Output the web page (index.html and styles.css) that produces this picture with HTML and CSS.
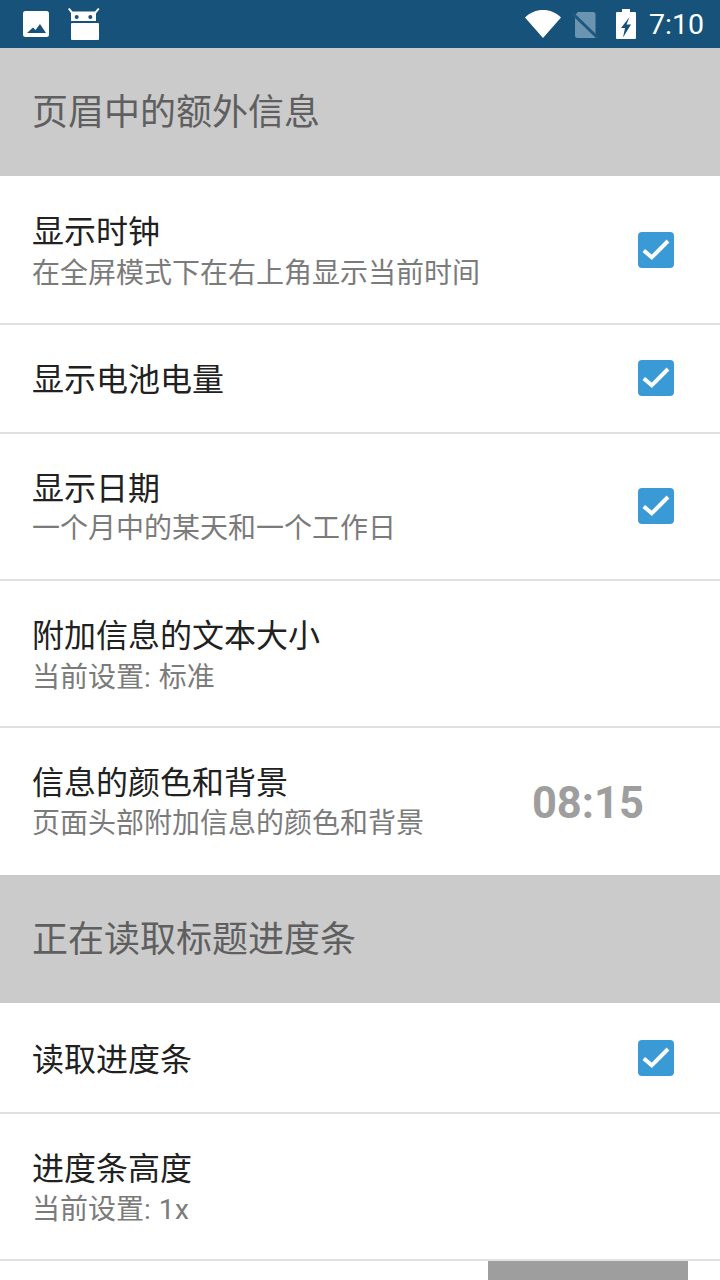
FILE: index.html
```html
<!DOCTYPE html>
<html>
<head>
<meta charset="utf-8"/>
<title>设置</title>
<link rel="stylesheet" href="styles.css">
</head>
<body>
<div class="statusbar">
  <svg class="ic-pic" viewBox="0 0 26 26"><path fill="#fff" d="M2.500 0h21A2.500 2.500 0 0 1 26 2.500v21a2.500 2.500 0 0 1-2.500 2.500h-21A2.500 2.500 0 0 1 0 23.500v-21A2.500 2.500 0 0 1 2.500 0z"/><path fill="#17527a" d="M4 22l6-5.500 2.500 2.500 4.500-6 6 9z"/></svg>
  <svg class="ic-droid" viewBox="0 0 32 32"><g fill="#fff"><path d="M0 1l1.500-1 3 3.500h22.500l3-3.500 1.500 1-3.500 4.500V13H3V5z"/><rect x="3" y="15" width="28" height="17" rx="1"/></g><circle cx="8.700" cy="9" r="2" fill="#17527a"/><circle cx="22.300" cy="9" r="2" fill="#17527a"/></svg>
  <span class="spacer"></span>
  <svg class="ic-wifi" viewBox="0 0 36 28"><path fill="#fff" d="M0 7.500C5 2.500 11 0 18 0s13 2.500 18 7.500L18 28z"/></svg>
  <svg class="ic-sim" viewBox="0 0 26 26"><path fill="#6a94af" d="M6 0h15a2.500 2.500 0 0 1 2.500 2.500V26H5.500a2.500 2.500 0 0 1-2.500-2.500V3z"/><path stroke="#1f587f" stroke-width="3" d="M0 1l26 25"/></svg>
  <svg class="ic-bat" viewBox="0 0 20 30"><path fill="#fff" d="M6 0h8v3h5a1 1 0 0 1 1 1v25a1 1 0 0 1-1 1H1a1 1 0 0 1-1-1V4a1 1 0 0 1 1-1h5z"/><path fill="#17527a" d="M13.500 8L5 19h4l-2 9.500 8-13h-4.500z"/></svg>
  <span class="clock">7:10</span>
</div>

<div class="section">页眉中的额外信息</div>

<div class="row first wide">
  <div class="txt"><div class="title">显示时钟</div><div class="sub">在全屏模式下在右上角显示当前时间</div></div>
  <span class="check"><svg viewBox="0 0 36 36"><path d="M5.800 18.500l8 6.800L30 9" fill="none" stroke="#fff" stroke-width="4"/></svg></span>
</div>
<div class="row short up">
  <div class="txt"><div class="title">显示电池电量</div></div>
  <span class="check"><svg viewBox="0 0 36 36"><path d="M5.800 18.500l8 6.800L30 9" fill="none" stroke="#fff" stroke-width="4"/></svg></span>
</div>
<div class="row tall up">
  <div class="txt"><div class="title">显示日期</div><div class="sub">一个月中的某天和一个工作日</div></div>
  <span class="check"><svg viewBox="0 0 36 36"><path d="M5.800 18.500l8 6.800L30 9" fill="none" stroke="#fff" stroke-width="4"/></svg></span>
</div>
<div class="row tall wide">
  <div class="txt"><div class="title">附加信息的文本大小</div><div class="sub">当前设置<span class="lat">: </span>标准</div></div>
</div>
<div class="row tall last">
  <div class="txt"><div class="title">信息的颜色和背景</div><div class="sub">页面头部附加信息的颜色和背景</div></div>
  <span class="preview">08:15</span>
</div>

<div class="section">正在读取标题进度条</div>

<div class="row shortb">
  <div class="txt"><div class="title">读取进度条</div></div>
  <span class="check"><svg viewBox="0 0 36 36"><path d="M5.800 18.500l8 6.800L30 9" fill="none" stroke="#fff" stroke-width="4"/></svg></span>
</div>
<div class="row tall mid">
  <div class="txt"><div class="title">进度条高度</div><div class="sub">当前设置<span class="lat">: 1x</span></div></div>
</div>
<div class="bottom"><div class="bar"></div></div>
</body>
</html>
```
FILE: styles.css
```css
html, body {
  margin: 0;
  padding: 0;
}

body {
  width: 720px;
  height: 1280px;
  overflow: hidden;
  background-color: white;
  font-family: "Roboto", "Noto Sans CJK SC", sans-serif;
}

.statusbar {
  height: 48px;
  background-color: #17527a;
  display: flex;
  align-items: center;
  color: white;
}

.spacer {
  flex: 1;
}

.ic-pic {
  width: 26px;
  height: 26px;
  margin-left: 23px;
}

.ic-droid {
  width: 32px;
  height: 32px;
  margin-left: 19px;
}

.ic-wifi {
  width: 36px;
  height: 28px;
}

.ic-sim {
  width: 26px;
  height: 26px;
  margin-left: 11px;
  margin-top: 2px;
}

.ic-bat {
  width: 20px;
  height: 30px;
  margin-left: 18px;
}

.clock {
  font-size: 28.5px;
  margin-left: 13px;
  margin-right: 16px;
}

.section {
  height: 128px;
  background-color: #cbcbcb;
  color: #5f5f5f;
  font-size: 36px;
  line-height: 130px;
  padding-left: 32px;
}

.row {
  display: flex;
  align-items: center;
  padding-left: 32px;
  padding-right: 46px;
  border-bottom: 2px solid #e0e0e0;
  box-sizing: border-box;
}

.first {
  height: 149px;
}

.tall {
  height: 147px;
}

.short {
  height: 109px;
}

.shortb {
  height: 111px;
}

.last {
  border-bottom: none;
}

.txt {
  flex: 1;
  padding-top: 3px;
}

.title {
  font-size: 32px;
  line-height: 40px;
  color: #212121;
}

.sub {
  font-size: 28px;
  line-height: 36px;
  margin-top: 2px;
  color: #7b7b7b;
}

/* rows differ by a pixel or two in the text block */
.wide .txt {
  padding-top: 5px;
}

.wide .sub {
  margin-top: 4px;
}

.mid .txt {
  padding-top: 4px;
}

.mid .sub {
  margin-top: 3px;
}

.last .txt {
  padding-top: 2px;
}

.last .sub {
  margin-top: 3px;
}

.shortb .txt {
  padding-top: 5px;
}

.lat {
  letter-spacing: .5px;
}

.check {
  width: 36px;
  height: 36px;
  background-color: #3a9ad6;
  border-radius: 4px;
  display: block;
}

.up .check {
  margin-bottom: 1px;
}

.check svg {
  display: block;
  width: 36px;
  height: 36px;
}

.preview {
  font-size: 43.5px;
  font-weight: bold;
  color: #9e9e9e;
  margin-right: 30px;
  margin-top: 4px;
}

.bottom {
  height: 19px;
  display: flex;
  justify-content: flex-end;
  padding-right: 32px;
}

.bar {
  width: 200px;
  height: 19px;
  background-color: #9e9e9e;
}
```
